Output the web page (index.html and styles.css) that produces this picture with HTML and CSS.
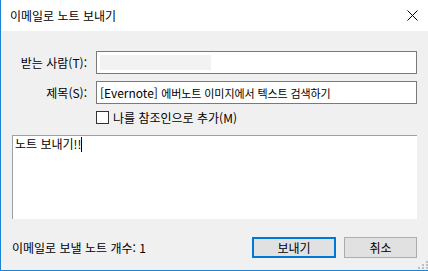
FILE: index.html
```html
<!DOCTYPE html>
<html lang="ko">
<head>
<meta charset="utf-8">
<title>이메일로 노트 보내기</title>
<link rel="stylesheet" href="styles.css">
</head>
<body>
<div class="window">
  <div class="titlebar">
    <span class="title">이메일로 노트 보내기</span>
    <svg class="close" width="11" height="11" viewBox="0 0 11 11"><path d="M0.5 0.5L10.5 10.5M10.5 0.5L0.5 10.5" stroke="#000" stroke-width="1" fill="none"/></svg>
  </div>
  <div class="content">
    <div class="form">
      <label class="label">받는 사람(<u>T</u>):</label>
      <div class="field"><span class="redacted"></span></div>
      <label class="label">제목(<u>S</u>):</label>
      <div class="field"><span class="value">[Evernote] <span class="ko">에버노트 이미지에서 텍스트 검색하기</span></span></div>
      <div class="check-row">
        <span class="checkbox"></span>
        <span class="check-label">나를 참조인으로 추가(<u>M</u>)</span>
      </div>
    </div>
    <div class="body-box"><span class="body-text">노트 보내기!!</span><span class="caret"></span></div>
    <div class="footer">
      <span class="status">이메일로 보낼 노트 개수: 1</span>
      <div class="buttons">
        <button class="btn btn-default">보내기</button>
        <button class="btn btn-cancel">취소</button>
      </div>
    </div>
    <svg class="grip" width="10" height="8" viewBox="0 0 10 8">
      <rect x="8" y="0" width="2" height="2" fill="#bfbfbf"/>
      <rect x="4" y="3" width="2" height="2" fill="#bfbfbf"/>
      <rect x="8" y="3" width="2" height="2" fill="#bfbfbf"/>
      <rect x="0" y="6" width="2" height="2" fill="#bfbfbf"/>
      <rect x="4" y="6" width="2" height="2" fill="#bfbfbf"/>
      <rect x="8" y="6" width="2" height="2" fill="#bfbfbf"/>
    </svg>
  </div>
</div>
</body>
</html>
```
FILE: styles.css
```css
html, body {
  margin: 0;
  padding: 0;
}
body {
  width: 428px;
  height: 271px;
  overflow: hidden;
  font-family: "Noto Sans CJK KR", "Noto Sans", sans-serif;
  font-size: 12px;
  color: #000;
}
u { text-decoration: none; }
.window {
  width: 428px;
  height: 271px;
  box-sizing: border-box;
  border-left: 1px solid #1883d7;
  border-bottom: 1px solid #1883d7;
  display: flex;
  flex-direction: column;
}
.titlebar {
  height: 31px;
  flex: none;
  background: #fff;
  display: flex;
  align-items: center;
  justify-content: space-between;
  padding: 0 10px 0 9px;
}
.title {
  font-size: 12px;
  line-height: 16px;
}
.close {
  display: block;
  margin-top: -1px;
}
.content {
  flex: 1;
  background: #f0f0f0;
  padding: 20px 11px 0 11px;
  position: relative;
  display: flex;
  flex-direction: column;
}
.form {
  display: grid;
  grid-template-columns: 75px 321px;
  column-gap: 9px;
  row-gap: 7px;
  align-items: center;
}
.label {
  text-align: right;
  line-height: 16px;
}
.field {
  height: 23px;
  box-sizing: border-box;
  border: 1px solid #7a7a7a;
  background: #fff;
  display: flex;
  align-items: center;
  padding-left: 3px;
}
.redacted {
  display: block;
  width: 111px;
  height: 15px;
  background: #f2f2f2;
}
.value {
  line-height: 16px;
  white-space: nowrap;
}
.ko {
  font-size: 11px;
  letter-spacing: -0.1px;
}
.check-row {
  grid-column: 2;
  display: flex;
  align-items: center;
  height: 13px;
}
.checkbox {
  width: 13px;
  height: 13px;
  box-sizing: border-box;
  border: 1px solid #333;
  background: #fff;
  margin-right: 4px;
}
.check-label {
  line-height: 16px;
}
.body-box {
  margin-top: 11px;
  height: 84px;
  box-sizing: border-box;
  background: #fff;
  border-top: 1px solid #a0a0a0;
  border-left: 1px solid #a0a0a0;
  padding: 0 0 0 2px;
  display: flex;
  align-items: flex-start;
}
.body-text {
  line-height: 16px;
}
.caret {
  display: inline-block;
  width: 1px;
  height: 15px;
  background: #000;
  margin-top: 1px;
}
.footer {
  display: flex;
  align-items: center;
  justify-content: space-between;
  margin-top: 18px;
  height: 21px;
}
.status {
  line-height: 16px;
}
.buttons {
  display: flex;
  gap: 8px;
}
.btn {
  font-family: inherit;
  font-size: 12px;
  color: #000;
  background: #e1e1e1;
  height: 21px;
  box-sizing: border-box;
  padding: 0;
  margin: 0;
  line-height: 16px;
}
.btn-default {
  width: 84px;
  border: 2px solid #0078d7;
}
.btn-cancel {
  width: 73px;
  border: 1px solid #adadad;
}
.grip {
  position: absolute;
  right: 0;
  bottom: 1px;
}
```
